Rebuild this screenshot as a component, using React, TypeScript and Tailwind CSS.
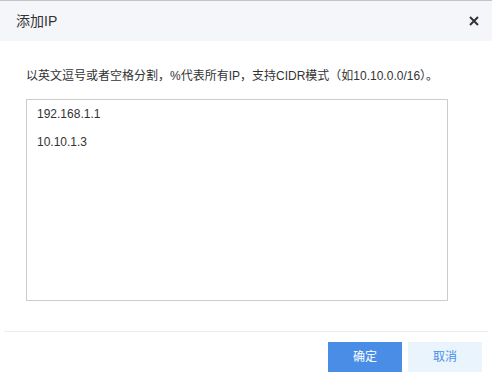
import React from "react";

export default function App() {
  return (
    <div
      className="w-[492px] h-[382px] bg-white border-t border-[#c4c4c4] overflow-hidden"
      style={{ fontFamily: '"Liberation Sans", "Noto Sans CJK SC", sans-serif' }}
    >
      <div className="h-[40px] bg-[#f5f6fa] flex items-center justify-between pl-4 pr-[12px]">
        <span className="text-[14px] text-[#333]">添加IP</span>
        <svg width="10" height="10" viewBox="0 0 10 10" className="mr-[1px]">
          <path d="M1 1 L9 9 M9 1 L1 9" stroke="#333" strokeWidth="2" />
        </svg>
      </div>
      <div className="mt-[26px] px-[26px] text-[12px] leading-[18px] text-[#333]">
        以英文逗号或者空格分割，%代表所有IP，支持CIDR模式（如10.10.0.0/16）。
      </div>
      <div className="mt-[14px] ml-[26px] w-[422px] h-[202px] border border-[#cccccc] px-[10px] text-[12px] text-[#333]">
        <div className="leading-[28px]">192.168.1.1</div>
        <div className="leading-[28px]">10.10.1.3</div>
      </div>
      <div className="mt-[30px] mx-1 h-px bg-[#ececec]" />
      <div className="mt-[10px] flex justify-end gap-[6px] pr-[10px]">
        <button className="w-[74px] h-[30px] bg-[#4a8de6] text-white text-[12px]">确定</button>
        <button className="w-[74px] h-[30px] bg-[#eaf4fd] text-[#4a8de6] text-[12px]">取消</button>
      </div>
    </div>
  );
}
